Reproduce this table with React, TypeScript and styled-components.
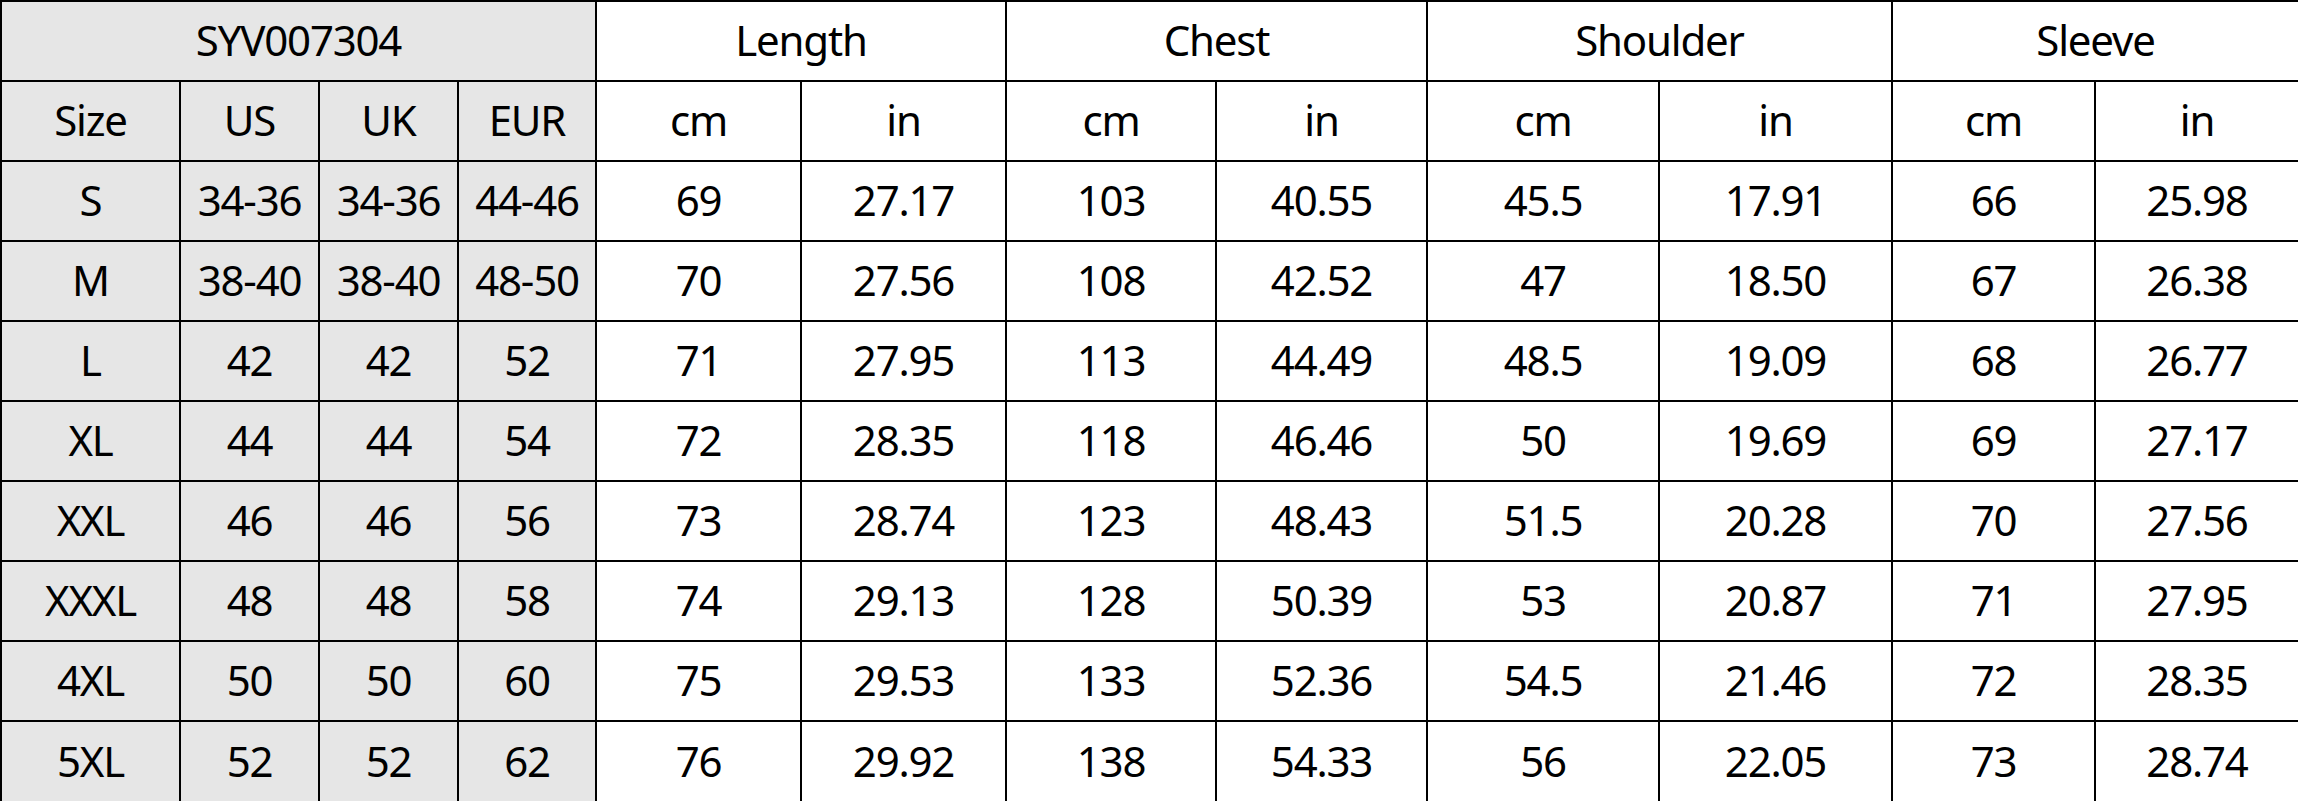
import React from "react";
import styled, { createGlobalStyle } from "styled-components";

const GlobalStyle = createGlobalStyle`
  html, body {
    margin: 0;
    padding: 0;
    background: #ffffff;
  }
`;

const COLS = [179, 139, 139, 138, 205, 205, 210, 211, 232, 233, 203, 204];

const Table = styled.div`
  display: grid;
  grid-template-columns: ${COLS.map((c) => `${c}px`).join(" ")};
  grid-template-rows: repeat(9, 80px) 81px;
  width: 2298px;
  height: 801px;
  box-sizing: border-box;
  border-top: 2px solid #000;
  border-left: 2px solid #000;
  font-family: "Noto Sans", "Open Sans", "DejaVu Sans", sans-serif;
  color: #000;
`;

const Cell = styled.div<{ $gray?: boolean; $span?: number }>`
  grid-column: span ${(p) => p.$span || 1};
  display: flex;
  align-items: center;
  justify-content: center;
  box-sizing: border-box;
  padding-bottom: 2px;
  border-right: 2px solid #000;
  border-bottom: 2px solid #000;
  background: ${(p) => (p.$gray ? "#e6e6e6" : "#ffffff")};
  font-size: 42px;
  line-height: 1;
  white-space: nowrap;
  letter-spacing: -1.2px;
`;

type Row = {
  size: string;
  us: string;
  uk: string;
  eur: string;
  vals: string[];
};

const rows: Row[] = [
  { size: "S", us: "34-36", uk: "34-36", eur: "44-46", vals: ["69", "27.17", "103", "40.55", "45.5", "17.91", "66", "25.98"] },
  { size: "M", us: "38-40", uk: "38-40", eur: "48-50", vals: ["70", "27.56", "108", "42.52", "47", "18.50", "67", "26.38"] },
  { size: "L", us: "42", uk: "42", eur: "52", vals: ["71", "27.95", "113", "44.49", "48.5", "19.09", "68", "26.77"] },
  { size: "XL", us: "44", uk: "44", eur: "54", vals: ["72", "28.35", "118", "46.46", "50", "19.69", "69", "27.17"] },
  { size: "XXL", us: "46", uk: "46", eur: "56", vals: ["73", "28.74", "123", "48.43", "51.5", "20.28", "70", "27.56"] },
  { size: "XXXL", us: "48", uk: "48", eur: "58", vals: ["74", "29.13", "128", "50.39", "53", "20.87", "71", "27.95"] },
  { size: "4XL", us: "50", uk: "50", eur: "60", vals: ["75", "29.53", "133", "52.36", "54.5", "21.46", "72", "28.35"] },
  { size: "5XL", us: "52", uk: "52", eur: "62", vals: ["76", "29.92", "138", "54.33", "56", "22.05", "73", "28.74"] },
];

const groups = ["Length", "Chest", "Shoulder", "Sleeve"];

export default function App() {
  return (
    <>
      <GlobalStyle />
      <Table>
        <Cell $gray $span={4}>SYV007304</Cell>
        {groups.map((g) => (
          <Cell key={g} $span={2}>
            {g}
          </Cell>
        ))}

        <Cell $gray>Size</Cell>
        <Cell $gray>US</Cell>
        <Cell $gray>UK</Cell>
        <Cell $gray>EUR</Cell>
        {groups.map((g) => (
          <React.Fragment key={g + "-u"}>
            <Cell>cm</Cell>
            <Cell>in</Cell>
          </React.Fragment>
        ))}

        {rows.map((r) => (
          <React.Fragment key={r.size}>
            <Cell $gray>{r.size}</Cell>
            <Cell $gray>{r.us}</Cell>
            <Cell $gray>{r.uk}</Cell>
            <Cell $gray>{r.eur}</Cell>
            {r.vals.map((v, i) => (
              <Cell key={i}>{v}</Cell>
            ))}
          </React.Fragment>
        ))}
      </Table>
    </>
  );
}
